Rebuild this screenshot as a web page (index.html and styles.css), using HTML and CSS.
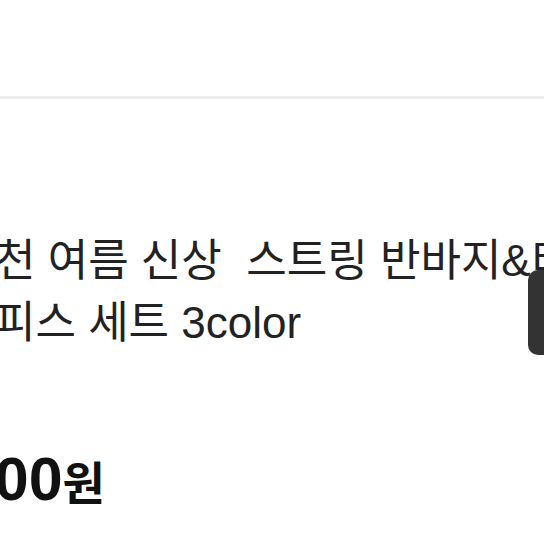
FILE: index.html
```html
<!DOCTYPE html>
<html lang="ko">
<head>
  <meta charset="UTF-8">
  <meta name="viewport" content="width=device-width, initial-scale=1.0">
  <title>상품 상세</title>
  <link rel="stylesheet" href="styles.css">
</head>
<body>
  <div class="page">
    <div class="header"></div>
    <div class="product-info">
      <h1 class="title">인견천 여름 신상&nbsp; 스트링 반바지&amp;티셔츠 롱원피스 세트 3color</h1>
      <div class="price">18,900<span class="won">원</span></div>
    </div>
    <div class="floating-btn"></div>
  </div>
</body>
</html>
```

FILE: styles.css
```css
body {
  margin: 0;
  padding: 0;
  background: #fff;
  font-family: "Liberation Sans", "Noto Sans CJK KR", sans-serif;
  color: #222;
}
.page {
  position: relative;
  width: 544px;
  height: 544px;
  overflow: hidden;
}
.header {
  height: 96px;
  border-bottom: 3px solid #ececec;
}
.product-info {
  padding-top: 131px;
}
.title {
  margin: 0 0 0 -86px;
  width: 790px;
  font-size: 44px;
  font-weight: normal;
  line-height: 62px;
  word-break: keep-all;
}
.price {
  margin: 90px 0 0 -124px;
  font-size: 61px;
  font-weight: bold;
  color: #111;
  line-height: 70px;
}
.won {
  font-size: 46px;
}
.floating-btn {
  position: absolute;
  left: 528px;
  top: 270px;
  width: 40px;
  height: 85px;
  background: #333;
  border-radius: 10px;
}
```
